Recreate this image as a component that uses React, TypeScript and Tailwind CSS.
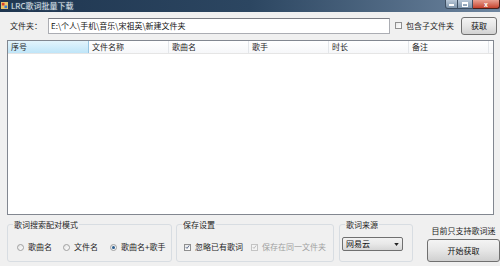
import React from "react";

const FONT = "font-['Noto_Sans_CJK_SC','Noto_Sans',sans-serif]";

const COLUMNS = [
  { label: "序号", w: 81, active: true },
  { label: "文件名称", w: 80 },
  { label: "歌曲名", w: 80 },
  { label: "歌手", w: 80 },
  { label: "时长", w: 80 },
  { label: "备注", w: 80 },
];

function Radio({ checked }: { checked?: boolean }) {
  return (
    <span className="flex h-[7px] w-[7px] shrink-0 items-center justify-center rounded-full border border-[#a0a0a0] bg-gradient-to-br from-[#e2e2e2] to-[#ffffff]">
      {checked && <span className="h-[3px] w-[3px] rounded-full bg-[#2a5d8f]" />}
    </span>
  );
}

function Check({ checked, disabled }: { checked?: boolean; disabled?: boolean }) {
  return (
    <span
      className={
        "flex h-[7px] w-[7px] shrink-0 items-center justify-center border " +
        (disabled ? "border-[#c4c4c4] bg-[#f4f4f4]" : "border-[#8f8f8f] bg-gradient-to-br from-[#e8e8e8] to-white")
      }
    >
      {checked && (
        <svg viewBox="0 0 8 8" className="h-[6px] w-[6px]">
          <path d="M1.3 4.2 L3.2 6.2 L6.8 1.4" fill="none" stroke={disabled ? "#b0b0b0" : "#3b4f78"} strokeWidth="1.3" />
        </svg>
      )}
    </span>
  );
}

function GroupBox({ title, className, children }: { title: string; className: string; children: React.ReactNode }) {
  return (
    <fieldset className={"min-w-0 rounded-[3px] border border-[#d8dde2] p-0 " + className}>
      <legend className="ml-[5px] whitespace-nowrap px-[1px] text-[8px] leading-[9px] text-[#1e1e1e]">{title}</legend>
      {children}
    </fieldset>
  );
}

export default function App() {
  return (
    <div className={`flex h-[266px] w-[500px] flex-col overflow-hidden bg-[#f0f0f0] ${FONT}`}>
      {/* title bar */}
      <div className="flex h-[12px] items-start bg-gradient-to-r from-[#1f3650] via-[#2c4661] to-[#6e86a0]">
        <svg viewBox="0 0 8 8" className="ml-[1px] mt-[2px] h-[7px] w-[7px]">
          <rect x="0" y="0" width="8" height="8" fill="#e9c46a" />
          <rect x="1" y="1" width="3" height="3" fill="#d9412b" />
          <rect x="4" y="4" width="3" height="3" fill="#3a7bd5" />
        </svg>
        <span className="ml-[3px] mt-[1px] whitespace-nowrap text-[8px] leading-[10px] text-[#dde3ea] [text-shadow:0_0_2px_#5f7890]">
          LRC歌词批量下载
        </span>
        <div className="ml-auto flex h-[9px]">
          <div className="flex w-[13px] items-center justify-center rounded-bl-[3px] border border-t-0 border-[#3e4f62] bg-gradient-to-b from-[#b8c8d8] to-[#7f95ab]">
            <span className="mt-[2px] h-[1.5px] w-[5px] bg-white" />
          </div>
          <div className="flex w-[15px] items-center justify-center border border-l-0 border-t-0 border-[#3e4f62] bg-gradient-to-b from-[#b8c8d8] to-[#7f95ab]">
            <span className="h-[5px] w-[6px] border border-t-2 border-white" />
          </div>
          <div className="flex w-[27px] items-center justify-center rounded-br-[3px] border border-l-0 border-t-0 border-[#4a1f18] bg-gradient-to-b from-[#e8a091] to-[#c4402c] text-[7px] font-bold leading-none text-white">
            x
          </div>
        </div>
      </div>

      <div className="flex flex-1 flex-col px-[7px]">
        {/* folder row */}
        <div className="mt-[4px] flex h-[19px] items-center whitespace-nowrap">
          <span className="ml-[3px] w-[38px] text-[8px] text-[#1e1e1e]">文件夹：</span>
          <div className="flex h-[16px] w-[342px] items-center border border-[#abadb3] border-t-[#7a7c84] bg-white pl-[2px] text-[8px] text-[#111]">
            E:\个人\手机\音乐\宋祖英\新建文件夹
          </div>
          <span className="ml-[5px]">
            <Check />
          </span>
          <span className="ml-[4px] text-[8px] text-[#1e1e1e]">包含子文件夹</span>
          <button className="ml-auto mr-[-4px] flex h-[18px] w-[36px] items-center justify-center rounded-[3px] border border-[#707070] bg-gradient-to-b from-[#f4f4f4] via-[#e6e6e6] to-[#d2d2d2] text-[8px] text-[#111]">
            获取
          </button>
        </div>

        {/* list view */}
        <div className="mt-[5px] h-[175px] w-[487px] border border-[#828790] bg-white">
          <div className="flex h-[13px] border-b border-[#e5e5e5] bg-gradient-to-b from-white to-[#f6f7f9]">
            {COLUMNS.map((c) => (
              <div
                key={c.label}
                style={{ width: c.w }}
                className={
                  "flex shrink-0 items-center whitespace-nowrap border-r pl-[3px] text-[8px] text-[#1e1e1e] " +
                  (c.active
                    ? "border-[#96c5e2] bg-gradient-to-b from-[#e3f4fc] to-[#bfe5f8]"
                    : "border-[#e3e6ea]")
                }
              >
                {c.label}
              </div>
            ))}
            <div className="flex-1" />
          </div>
        </div>

        {/* bottom */}
        <div className="mt-[5px] flex h-[42px] whitespace-nowrap">
          <GroupBox title="歌词搜索配对模式" className="w-[165px] shrink-0">
            <div className="mt-[12px] flex items-center text-[8px] text-[#1e1e1e]">
              <span className="ml-[9px]"><Radio /></span>
              <span className="ml-[4px]">歌曲名</span>
              <span className="ml-[11px]"><Radio /></span>
              <span className="ml-[4px]">文件名</span>
              <span className="ml-[12px]"><Radio checked /></span>
              <span className="ml-[4px]">歌曲名+歌手</span>
            </div>
          </GroupBox>
          <GroupBox title="保存设置" className="ml-[4px] w-[158px] shrink-0">
            <div className="mt-[12px] flex items-center text-[8px]">
              <span className="ml-[7px]"><Check checked /></span>
              <span className="ml-[4px] text-[#1e1e1e]">忽略已有歌词</span>
              <span className="ml-[8px]"><Check checked disabled /></span>
              <span className="ml-[4px] text-[#a0a0a0]">保存在同一文件夹</span>
            </div>
          </GroupBox>
          <GroupBox title="歌词来源" className="ml-[5px] w-[74px] shrink-0">
            <div className="ml-[2px] mt-[8px] flex h-[14px] w-[61px] items-center justify-between rounded-[2px] border border-[#707070] bg-gradient-to-b from-[#f2f2f2] via-[#e8e8e8] to-[#d6d6d6] px-[3px] text-[8px] text-[#111]">
              <span>网易云</span>
              <svg viewBox="0 0 6 4" className="h-[3px] w-[5px]">
                <path d="M0 0 H6 L3 4 Z" fill="#222" />
              </svg>
            </div>
          </GroupBox>
          <div className="ml-[14px] flex flex-col items-center">
            <span className="mt-[6px] text-[8px] leading-[10px] text-[#1e1e1e]">目前只支持歌词迷</span>
            <button className="mt-[3px] flex h-[23px] w-[73px] items-center justify-center rounded-[3px] border border-[#707070] bg-gradient-to-b from-[#f4f4f4] via-[#e6e6e6] to-[#d0d0d0] text-[8px] text-[#111]">
              开始获取
            </button>
          </div>
        </div>
      </div>
    </div>
  );
}
